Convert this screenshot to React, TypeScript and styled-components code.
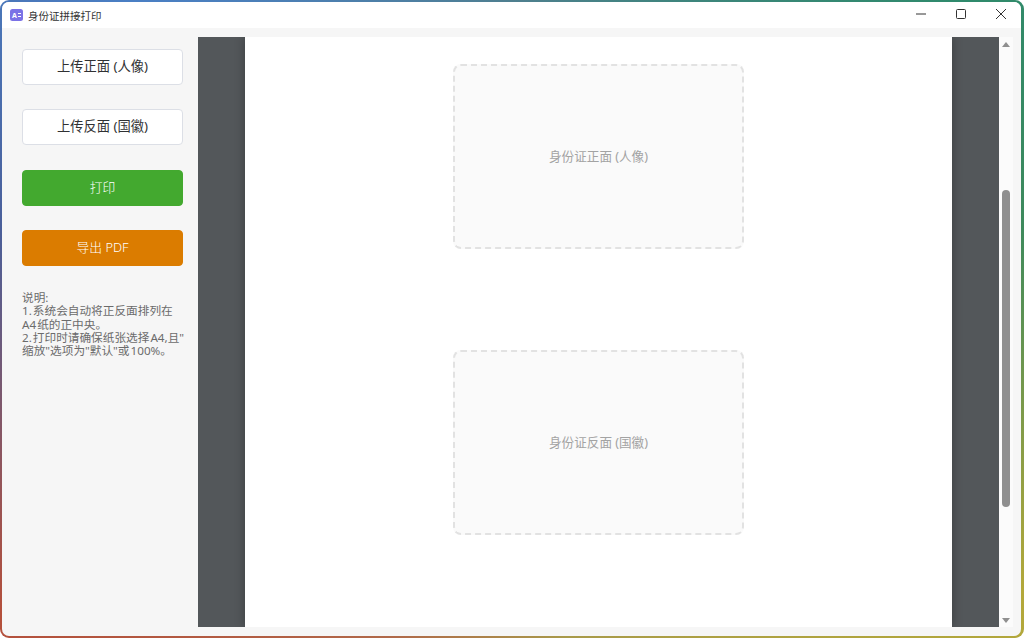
import styled, { createGlobalStyle } from "styled-components";

const GlobalStyle = createGlobalStyle`
  html, body {
    margin: 0;
    padding: 0;
    background: #ffffff;
  }
  * {
    box-sizing: border-box;
  }
`;

const Frame = styled.div`
  width: 1024px;
  height: 638px;
  padding: 2px 3px 2px 2px;
  border-radius: 9px;
  background: conic-gradient(
    from 0deg at 50% 50%,
    #4f7f8f 0deg,
    #2f8a6c 55deg,
    #3e8a5c 80deg,
    #b3a83a 118deg,
    #a89a4a 170deg,
    #b06a4a 200deg,
    #b4503c 240deg,
    #4a5f9a 280deg,
    #4a7fc4 310deg,
    #4f7f8f 360deg
  );
  font-family: "Noto Sans", "Noto Sans CJK SC", sans-serif;
`;

const Window = styled.div`
  width: 100%;
  height: 100%;
  display: flex;
  flex-direction: column;
  border-radius: 7px;
  overflow: hidden;
  background: #f6f6f6;
`;

const TitleBar = styled.div`
  height: 26px;
  flex: none;
  display: flex;
  align-items: center;
  padding-left: 8px;
  gap: 5px;
  background: #ffffff;
  color: #333333;
  font-size: 10.5px;
`;

const AppIcon = styled.svg`
  width: 13px;
  height: 12px;
  flex: none;
`;

const Title = styled.span`
  flex: 1;
`;

const Controls = styled.div`
  display: flex;
  align-self: stretch;
`;

const ControlButton = styled.div`
  width: 40px;
  display: flex;
  align-items: center;
  justify-content: center;
  padding-bottom: 2px;
`;

const Body = styled.div`
  flex: 1;
  min-height: 0;
  display: flex;
  padding: 9px 8px 9px 0;
`;

const Sidebar = styled.div`
  width: 196px;
  flex: none;
  display: flex;
  flex-direction: column;
  gap: 24.3px;
  padding: 12px 15px 0 20px;
`;

const ActionButton = styled.div<{ $bg?: string; $fg?: string }>`
  height: 36px;
  flex: none;
  display: flex;
  align-items: center;
  justify-content: center;
  padding-bottom: 3px;
  border-radius: 4px;
  border: 1px solid ${(p) => p.$bg || "#dcdfe6"};
  background: ${(p) => p.$bg || "#ffffff"};
  color: ${(p) => p.$fg || "#303133"};
  font-size: ${(p) => (p.$bg ? "12.8px" : "13.3px")};
  font-weight: ${(p) => (p.$bg ? 300 : 400)};
`;

const Notes = styled.div`
  padding-top: 1px;
  color: #6b6b6b;
  font-size: 11.67px;
  line-height: 13.3px;
  white-space: nowrap;
  word-spacing: -2px;
`;

const Viewer = styled.div`
  flex: 1;
  min-width: 0;
  display: flex;
  justify-content: center;
  overflow: hidden;
  background: #53575a;
`;

const Page = styled.div`
  width: 707px;
  display: flex;
  flex-direction: column;
  align-items: center;
  gap: 101px;
  padding-top: 27px;
  background: #ffffff;
  box-shadow: 0 0 10px rgba(0, 0, 0, 0.3);
`;

const Slot = styled.div`
  width: 291px;
  height: 185px;
  flex: none;
  display: flex;
  align-items: center;
  justify-content: center;
  padding-bottom: 2px;
  border: 2px dashed #e2e2e2;
  border-radius: 8px;
  background: #fafafa;
  color: #a3a3a3;
  font-size: 12.6px;
`;

const ScrollBar = styled.div`
  width: 14px;
  flex: none;
  display: flex;
  flex-direction: column;
  background: #fbfbfb;
`;

const ScrollArrow = styled.div`
  height: 14px;
  flex: none;
  display: flex;
  align-items: center;
  justify-content: center;
`;

const ScrollTrack = styled.div`
  flex: 1;
  display: flex;
  justify-content: center;
  padding-top: 139px;
`;

const ScrollThumb = styled.div`
  width: 8px;
  height: 317px;
  border-radius: 4px;
  background: #8f8f8f;
`;

export default function App() {
  return (
    <>
      <GlobalStyle />
      <Frame>
        <Window>
          <TitleBar>
            <AppIcon viewBox="0 0 13 12">
              <rect width="13" height="12" rx="2.5" fill="#7b72e6" />
              <text x="2" y="8.6" fontSize="7" fontWeight="700" fill="#ffffff">
                A
              </text>
              <path d="M8 4.5h3M8 7.5h3" stroke="#ffffff" strokeWidth="1" />
            </AppIcon>
            <Title>身份证拼接打印</Title>
            <Controls>
              <ControlButton>
                <svg width="10" height="10" viewBox="0 0 10 10">
                  <path d="M0 5h10" stroke="#333" strokeWidth="1" />
                </svg>
              </ControlButton>
              <ControlButton>
                <svg width="10" height="10" viewBox="0 0 10 10">
                  <rect x="0.5" y="0.5" width="9" height="9" rx="1" fill="none" stroke="#333" />
                </svg>
              </ControlButton>
              <ControlButton>
                <svg width="10" height="10" viewBox="0 0 10 10">
                  <path d="M0 0l10 10M10 0L0 10" stroke="#333" strokeWidth="1" />
                </svg>
              </ControlButton>
            </Controls>
          </TitleBar>
          <Body>
            <Sidebar>
              <ActionButton>上传正面 (人像)</ActionButton>
              <ActionButton>上传反面 (国徽)</ActionButton>
              <ActionButton $bg="#43a92f" $fg="#ffffff">
                打印
              </ActionButton>
              <ActionButton $bg="#db7c00" $fg="#ffffff">
                导出 PDF
              </ActionButton>
              <Notes>
                说明:
                <br />
                1. 系统会自动将正反面排列在
                <br />
                A4 纸的正中央。
                <br />
                2. 打印时请确保纸张选择 A4,且"
                <br />
                缩放"选项为"默认"或 100%。
              </Notes>
            </Sidebar>
            <Viewer>
              <Page>
                <Slot>身份证正面 (人像)</Slot>
                <Slot>身份证反面 (国徽)</Slot>
              </Page>
            </Viewer>
            <ScrollBar>
              <ScrollArrow>
                <svg width="8" height="5" viewBox="0 0 8 5">
                  <path d="M4 0l4 5H0z" fill="#8f8f8f" />
                </svg>
              </ScrollArrow>
              <ScrollTrack>
                <ScrollThumb />
              </ScrollTrack>
              <ScrollArrow>
                <svg width="8" height="5" viewBox="0 0 8 5">
                  <path d="M0 0h8L4 5z" fill="#8f8f8f" />
                </svg>
              </ScrollArrow>
            </ScrollBar>
          </Body>
        </Window>
      </Frame>
    </>
  );
}
